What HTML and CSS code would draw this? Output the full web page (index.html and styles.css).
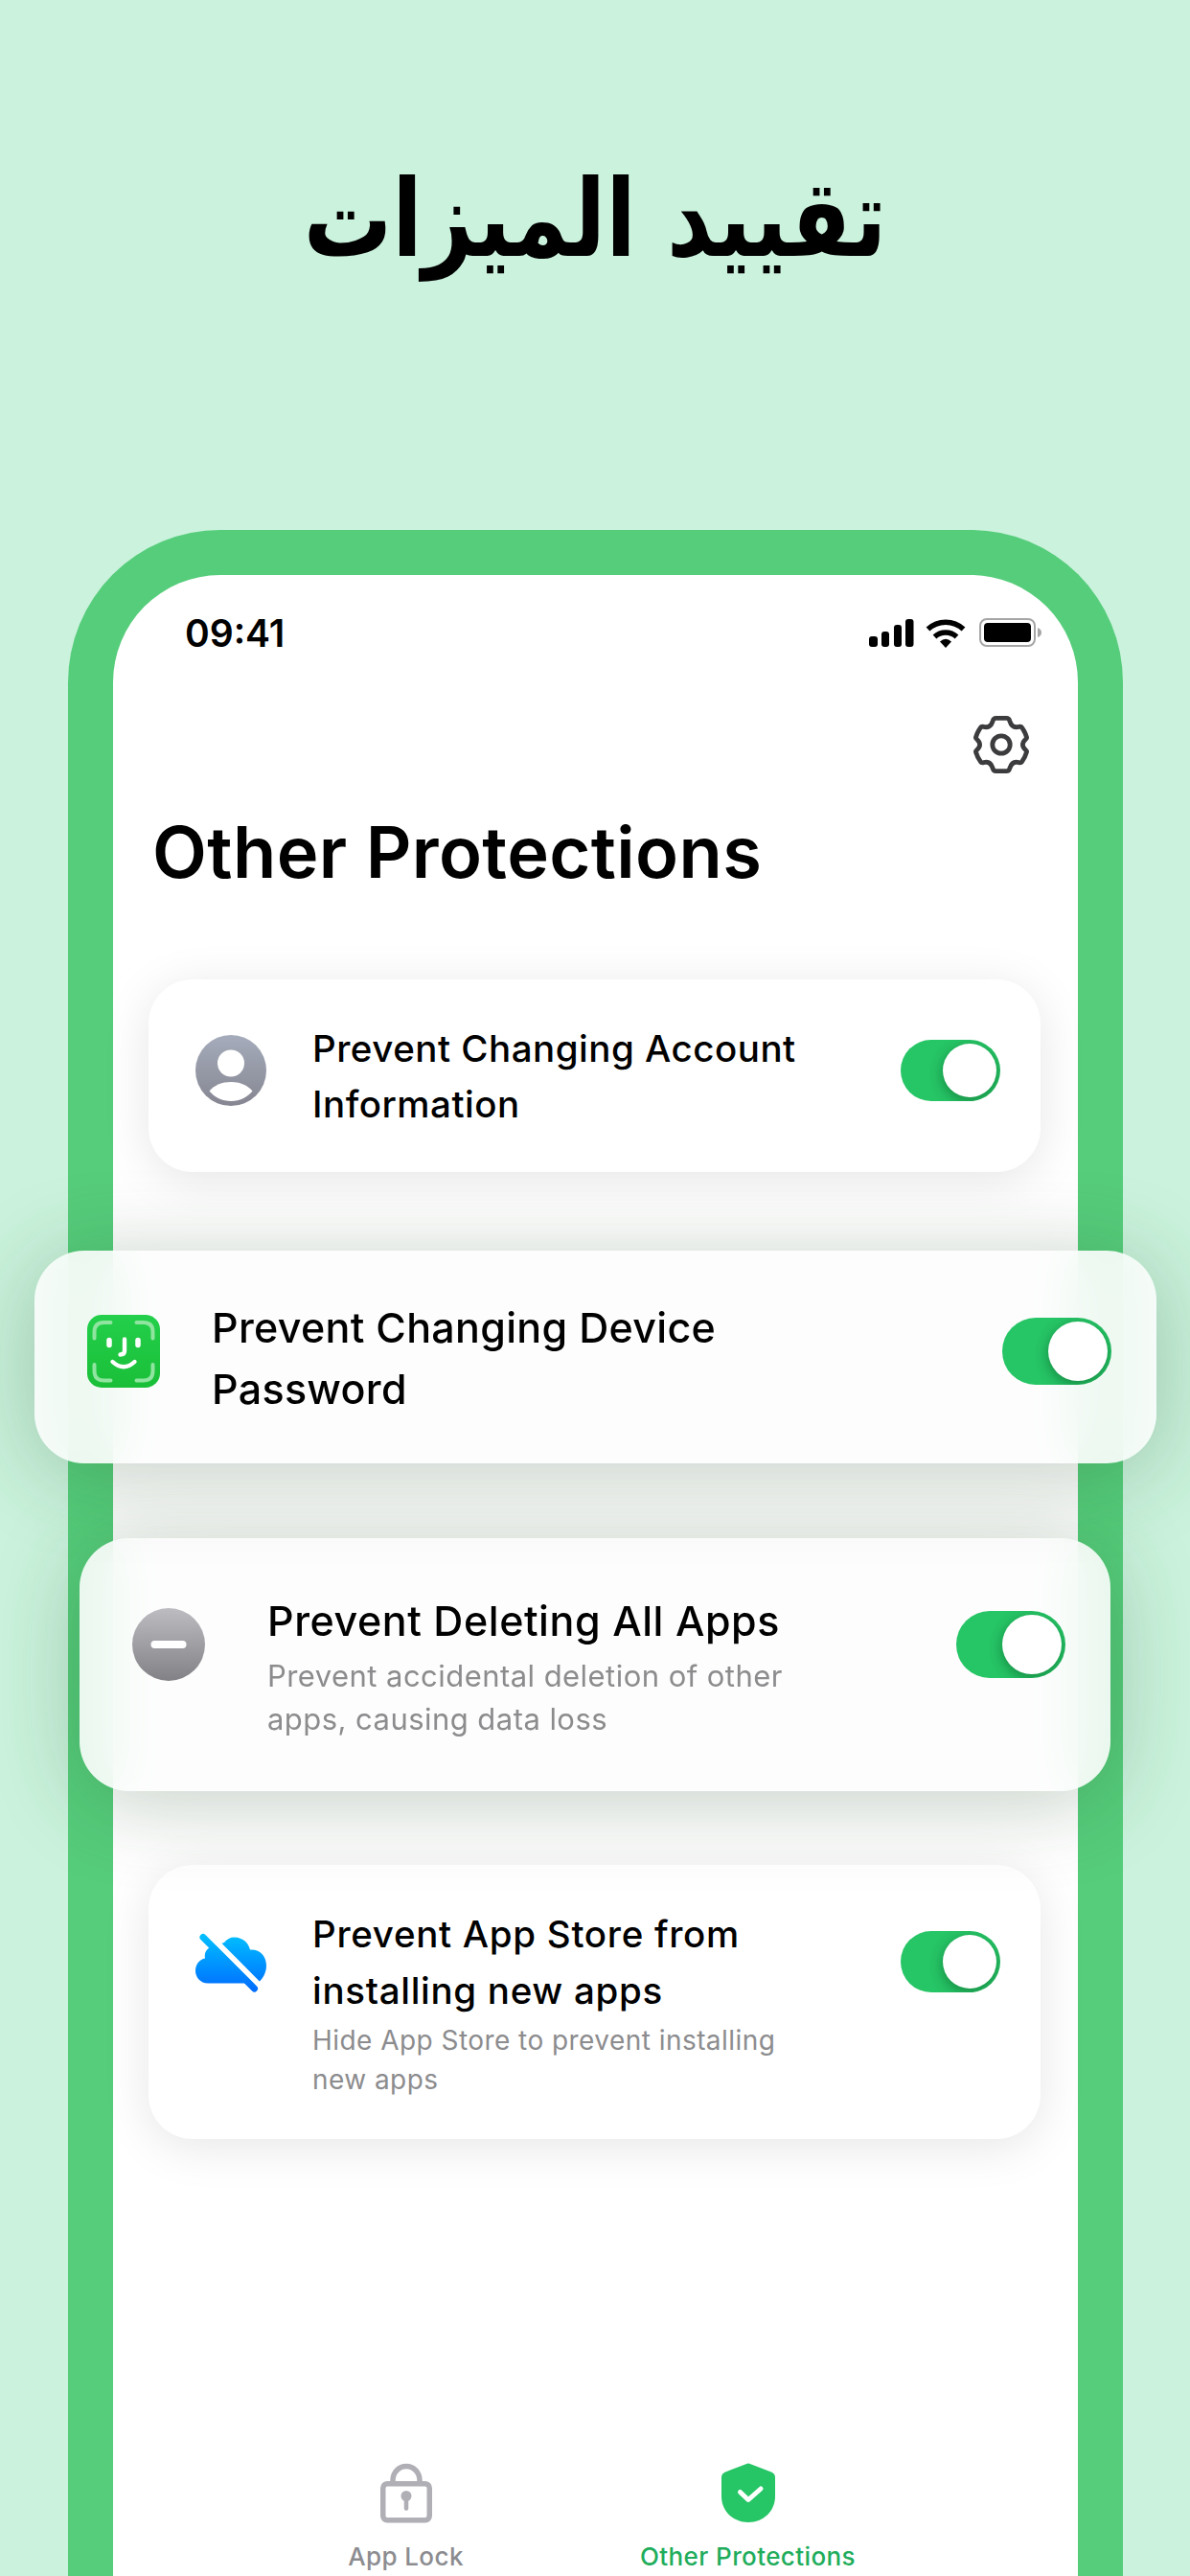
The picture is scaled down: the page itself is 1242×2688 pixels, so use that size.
FILE: index.html
```html
<!DOCTYPE html>
<html lang="ar">
	<head>
		<meta charset="utf-8">
		<meta name="viewport" content="width=device-width, initial-scale=1.0">
		<title>Other Protections</title>
		<link rel="stylesheet" href="styles.css">
	</head>
	<body>
		<h1 class="headline" dir="rtl">تقييد الميزات</h1>
		<main class="phone" lang="en">
			<div class="status-bar">
				<span class="time">09:41</span>
				<svg class="status-icons" width="182" height="34" viewBox="0 0 182 34">
					<rect x="2" y="20" width="9" height="11" rx="3"/>
					<rect x="15" y="15" width="8" height="16" rx="3"/>
					<rect x="28" y="8" width="8" height="23" rx="3"/>
					<rect x="40" y="2" width="8.500" height="29" rx="3"/>
					<g fill="none" stroke="#000" stroke-width="5.500">
						<path d="M63.500 12.500a27 27 0 0 1 37 0"/>
						<path d="M70.500 20.500a17 17 0 0 1 23 0"/>
					</g>
					<path d="M76 25.500q6-5.500 12 0L82 32z"/>
					<rect x="118" y="2" width="57" height="28" rx="7" fill="none" stroke="#a6a6a6" stroke-width="2"/>
					<rect x="122" y="6" width="49" height="20" rx="4"/>
					<path d="M178 11q4 1.500 4 5t-4 5z" fill="#a6a6a6"/>
				</svg>
			</div>
			<div class="toolbar">
				<svg width="60" height="62" viewBox="0 0 60 62" fill="none" stroke="#3c3c3e" stroke-width="4.800" stroke-linejoin="round">
					<path d="M24.500 3.400h11q2.500 0 3.300 2.800c1.400 4.500 4.200 7 8 6.500 2.200-.3 3.700-1.200 4.700.4q3.600 5 5.100 10.500c.4 1.500-4.200 2.700-4.200 7.400s4.600 5.900 4.200 7.400q-1.500 5.500-5.100 10.500c-1 1.600-2.500.7-4.700.4-3.800-.5-6.600 2-8 6.500q-.8 2.800-3.300 2.800h-11q-2.500 0-3.300-2.800c-1.400-4.500-4.200-7-8-6.500-2.200.3-3.700 1.200-4.700-.4q-3.600-5-5.100-10.500c-.4-1.500 4.200-2.700 4.200-7.400s-4.600-5.900-4.200-7.400q1.500-5.500 5.100-10.500c1-1.600 2.500-.7 4.700-.4 3.800.5 6.600-2 8-6.500q.8-2.800 3.300-2.800z"/>
					<circle cx="30" cy="31" r="9.200"/>
				</svg>
			</div>
			<h2 class="title">Other Protections</h2>

			<section class="card account">
				<svg class="icon" viewBox="0 0 74 74">
					<defs>
						<linearGradient id="slate" x1="0" y1="0" x2="0" y2="1">
							<stop offset="0" stop-color="#a5acbb"/>
							<stop offset="1" stop-color="#868692"/>
						</linearGradient>
					</defs>
					<circle cx="37" cy="37" r="37" fill="url(#slate)"/>
					<circle cx="37" cy="29.500" r="14" fill="#fff"/>
					<path d="M14.500 58.500C20 52 28 49 37 49s17 3 22.500 9.500C54 65 46 69 37 69s-17-4-22.500-10.500z" fill="#fff"/>
				</svg>
				<div class="text">
					<h3>Prevent Changing Account<br>Information</h3>
				</div>
				<span class="toggle"></span>
			</section>

			<section class="card featured password">
				<svg class="icon" viewBox="0 0 76 76" fill="none" stroke-linecap="round">
					<defs>
						<linearGradient id="leaf" x1="0" y1="0" x2="0" y2="1">
							<stop offset="0" stop-color="#23cf4b"/>
							<stop offset="1" stop-color="#1abf38"/>
						</linearGradient>
					</defs>
					<rect width="76" height="76" rx="15" fill="url(#leaf)"/>
					<path d="M7.500 24.500V18Q7.500 8 17.500 8H24.500M51.500 8h7Q68.500 8 68.500 18v6.500M68.500 52v6.500Q68.500 68.500 58.500 68.500h-7M24.500 68.500h-7Q7.500 68.500 7.500 58.500V52" stroke="#8fe59f" stroke-width="4"/>
					<path d="M23 26.500v5M53 26.500v5" stroke="#fff" stroke-width="5.500"/>
					<path d="M39 25.500v12Q39 41.500 34.500 41.500M26.500 49q11.500 10.500 23 0" stroke="#fff" stroke-width="4.400"/>
				</svg>
				<div class="text">
					<h3>Prevent Changing Device<br>Password</h3>
				</div>
				<span class="toggle"></span>
			</section>

			<section class="card featured deleting">
				<svg class="icon" viewBox="0 0 76 76">
					<defs>
						<linearGradient id="gray" x1="0" y1="0" x2="0" y2="1">
							<stop offset="0" stop-color="#bdbcc1"/>
							<stop offset="1" stop-color="#828186"/>
						</linearGradient>
					</defs>
					<circle cx="38" cy="38" r="38" fill="url(#gray)"/>
					<rect x="19.500" y="34" width="37" height="8" rx="4" fill="#fff"/>
				</svg>
				<div class="text">
					<h3>Prevent Deleting All Apps</h3>
					<p>Prevent accidental deletion of other<br>apps, causing data loss</p>
				</div>
				<span class="toggle"></span>
			</section>

			<section class="card store">
				<svg class="icon" viewBox="0 0 74 74">
					<defs>
						<linearGradient id="sky" gradientUnits="userSpaceOnUse" x1="0" y1="7" x2="0" y2="67">
							<stop offset="0" stop-color="#00c0ff"/>
							<stop offset="1" stop-color="#006cff"/>
						</linearGradient>
					</defs>
					<path d="M13 58.500C5 58.500 0 52 0 45.500 0 38.500 4.500 33.500 10 32.500 9 27 11 23.500 15 21L30 16C32.500 12.500 36.500 10.500 40.500 10.500c8 0 14.500 5 16.500 13C67 22.500 74 30 74 40c0 8-4.500 15-9.500 18.500z" fill="url(#sky)"/>
					<path d="M14 7.500 72 66" stroke="#fff" stroke-width="6"/>
					<path d="M8 10.500 61.500 64" stroke="url(#sky)" stroke-width="7" stroke-linecap="round"/>
				</svg>
				<div class="text">
					<h3>Prevent App Store from<br>installing new apps</h3>
					<p>Hide App Store to prevent installing<br>new apps</p>
				</div>
				<span class="toggle"></span>
			</section>

			<nav class="tabs">
				<div class="tab">
					<svg width="56" height="64" viewBox="0 0 56 64" fill="none" stroke="#b0afb6" stroke-width="5.500">
						<path d="M14 21v-2a14 14.500 0 0 1 28 0v2"/>
						<rect x="3.750" y="22.750" width="48.500" height="38" rx="4.500"/>
						<circle cx="28" cy="35.500" r="5.500" fill="#b0afb6" stroke="none"/>
						<path d="M28 37v11.500" stroke-width="4.500" stroke-linecap="round"/>
					</svg>
					<span>App Lock</span>
				</div>
				<div class="tab active">
					<svg width="58" height="64" viewBox="0 0 58 64">
						<path d="M26.500 2.200q2.500-1.200 5 0L53 10.500q4 1.500 4 5.500v20c0 15-12 27-28 27S1 51 1 36V16q0-4 4-5.500z" fill="#26c566"/>
						<path d="M20.500 31.500l8.500 8L42 28" fill="none" stroke="#fff" stroke-width="5" stroke-linecap="round" stroke-linejoin="round"/>
					</svg>
					<span>Other Protections</span>
				</div>
			</nav>
		</main>
	</body>
</html>
```

FILE: styles.css
```css
* {
	box-sizing: border-box;
}
body {
	margin: 0;
	height: 2688px;
	overflow: hidden;
	background-color: #caf2dc;
	color: #000;
	font-family: 'Inter', 'Liberation Sans', sans-serif;
}
h1, h2, h3, p {
	margin: 0;
}
svg {
	display: block;
	flex: none;
}
.headline {
	height: 553px;
	padding-top: 153px;
	font: bold 112px/150px 'DejaVu Sans', sans-serif;
	text-align: center;
	white-space: nowrap;
	transform: scaleX(0.823);
}
.phone {
	width: 1101px;
	height: 2135px;
	margin-left: 71px;
	background-color: #fff;
	border: 47px solid #56cd7b;
	border-bottom: 0;
	border-radius: 159px 159px 0 0;
}
.status-bar {
	display: flex;
	align-items: center;
	justify-content: space-between;
	height: 121px;
	padding: 0 38px 0 75px;
}
.time {
	font-size: 39px;
	font-weight: 600;
}
.toolbar {
	display: flex;
	align-items: center;
	justify-content: flex-end;
	height: 113px;
	padding: 0 50px 2px 0;
}
.title {
	padding-left: 41px;
	font-size: 74px;
	line-height: 110px;
	font-weight: 600;
	letter-spacing: 0.4px;
}
.card {
	display: flex;
	align-items: flex-start;
	position: relative;
	width: 931px;
	margin-left: 37px;
	padding: 43px 42px 0 49px;
	background-color: #fff;
	border-radius: 46px;
	box-shadow: 0 8px 50px rgba(0, 0, 0, 0.1);
}
.icon {
	width: 74px;
	height: 74px;
	margin-top: 15px;
}
.text {
	flex: 1;
	padding-left: 48px;
	white-space: nowrap;
}
.text h3 {
	font-size: 38.500px;
	line-height: 58px;
	font-weight: 500;
	letter-spacing: 0.500px;
}
.text p {
	color: #8c8c8e;
	font-size: 28px;
	line-height: 41px;
	letter-spacing: 0.450px;
}
.toggle {
	width: 104px;
	height: 64px;
	margin-top: 20px;
	padding: 4px;
	background-color: #26c566;
	border-radius: 35px;
	overflow: hidden;
}
.toggle::before {
	content: '';
	display: block;
	width: 56px;
	height: 56px;
	margin-left: auto;
	background-color: #fff;
	border-radius: 50%;
	box-shadow: 0 4px 14px rgba(0, 60, 20, 0.45);
}

.account {
	height: 201px;
	margin-top: 78px;
}
.featured {
	background-color: rgba(253, 253, 253, 0.88);
	border-radius: 52px;
	box-shadow: 0 10px 90px rgba(30, 70, 35, 0.27);
	backdrop-filter: blur(28px);
}
.featured .icon {
	width: 76px;
	height: 76px;
	margin-top: 19px;
}
.featured .text {
	padding-left: 54px;
}
.featured h3 {
	font-size: 43px;
	line-height: 64px;
	letter-spacing: 0.300px;
}
.featured .toggle {
	width: 114px;
	height: 70px;
	margin-top: 22px;
}
.featured .toggle::before {
	width: 62px;
	height: 62px;
}
.password {
	z-index: 2;
	width: 1171px;
	height: 222px;
	margin: 82px 0 0 -82px;
	padding: 48px 47px 0 55px;
}
.deleting {
	z-index: 1;
	width: 1076px;
	height: 264px;
	margin: 78px 0 0 -35px;
	padding: 54px 47px 0 55px;
}
.deleting .text {
	padding-left: 65px;
}
.deleting h3 {
	letter-spacing: 0.550px;
}
.deleting p {
	margin-top: 3px;
	font-size: 31px;
	line-height: 45px;
}
.store {
	height: 286px;
	margin-top: 77px;
	padding-top: 43px;
}
.store .icon {
	margin-top: 22px;
}
.store .toggle {
	margin-top: 26px;
}
.store h3 {
	line-height: 58.500px;
	letter-spacing: 0.700px;
}
.store p {
	margin-top: 3px;
}

.tabs {
	display: grid;
	grid-template-columns: 357px 357px;
	margin: 337px 0 0 127px;
}
.tab {
	display: flex;
	flex-direction: column;
	align-items: center;
	color: #8c8c90;
	font-size: 26px;
	line-height: 32px;
	font-weight: 500;
	letter-spacing: 0.400px;
}
.tab span {
	margin-top: 19px;
}
.active {
	color: #1fad5c;
}
```
